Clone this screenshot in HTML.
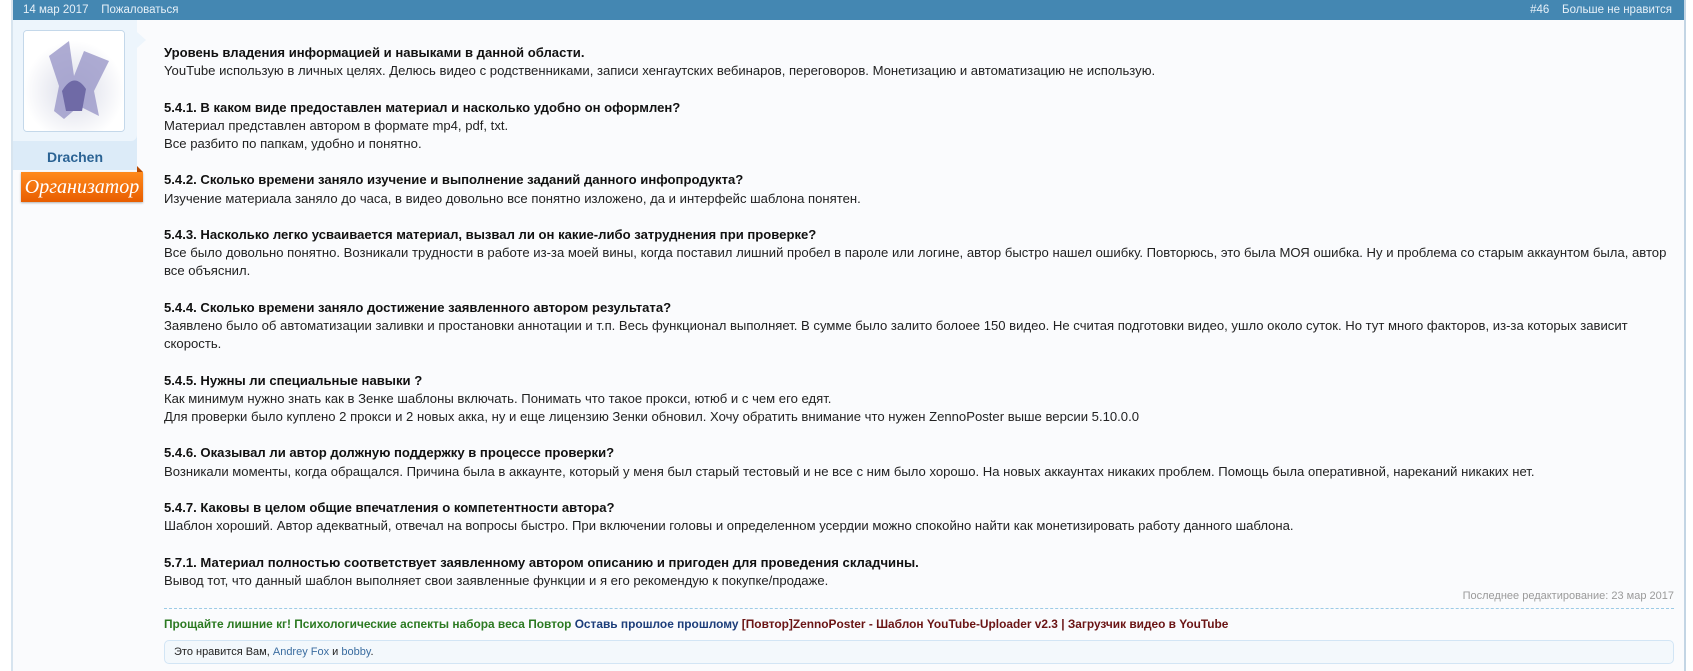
<!DOCTYPE html>
<html><head><meta charset="utf-8"><style>
*{margin:0;padding:0;box-sizing:border-box}
body{width:1693px;height:671px;background:#fff;font-family:"Liberation Sans",Arial,sans-serif;position:relative;overflow:hidden}
#frame{position:absolute;left:11px;top:0;width:1675px;height:671px;background:#fafbfd;border-left:2px solid #d7e4ef;border-right:2px solid #c3d5e4}
#hdr{position:absolute;left:13px;top:0;width:1671px;height:20px;background:#4487b2;color:#e6f0f8;font-size:11.5px;line-height:20px}
#hdr .l{position:absolute;left:10px}
#hdr .r{position:absolute;right:12px}
#side{position:absolute;left:13px;top:20px;width:124px;height:150px;background:#dcebf8}
#side .top{position:absolute;left:0;top:0;width:124px;height:121px;background:#edf5fc;border-radius:0 0 6px 0}
#ava{position:absolute;left:23px;top:30px;width:102px;height:102px;background:#fff;border:1px solid #c4d8ea;border-radius:4px;overflow:hidden}
#arrow{position:absolute;left:137px;top:32px;width:0;height:0;border-top:8px solid transparent;border-bottom:8px solid transparent;border-left:9px solid #edf5fc}
#name{position:absolute;left:13px;top:149px;width:124px;text-align:center;font-weight:bold;font-size:14px;color:#2b6394}
#badge{position:absolute;left:21px;top:172px;width:122px;height:30px;background:linear-gradient(#ff8a1c,#e85d00);color:#fff;font-family:"Liberation Serif",serif;font-style:italic;font-size:20px;text-align:center;line-height:30px;box-shadow:0 1px 2px rgba(0,0,0,.3)}
#fold{position:absolute;left:137px;top:166px;width:0;height:0;border-bottom:6px solid #b84a00;border-right:6px solid transparent}
#content{position:absolute;left:164px;top:44px;width:1510px;font-size:13.1px;line-height:18.2px;color:#222}
#content b{color:#111}
#edit{position:absolute;right:19px;top:590px;font-size:11px;color:#9a9a9a}
#dash{position:absolute;left:164px;top:608px;width:1510px;border-top:1px dashed #9ccbe6}
#sig{position:absolute;left:164px;top:617px;font-size:11.9px;font-weight:bold;white-space:nowrap}
#likes{position:absolute;left:164px;top:640px;width:1510px;height:24px;background:#f3f8fc;border:1px solid #d2e5f5;border-radius:5px;font-size:11px;line-height:22px;padding-left:9px;color:#222}
#likes a{color:#3b6da0;text-decoration:none}
</style></head><body>
<div id="frame"></div>
<div id="hdr"><span class="l">14 мар 2017 &nbsp;&nbsp; Пожаловаться</span><span class="r">#46 &nbsp;&nbsp; Больше не нравится</span></div>
<div id="side"><div class="top"></div></div>
<div id="arrow"></div>
<div id="ava"><svg width="100" height="100" viewBox="0 0 100 100"><defs><radialGradient id="g" cx=".5" cy=".6" r=".5"><stop offset="0" stop-color="#d9dbe8"/><stop offset="1" stop-color="#fff"/></radialGradient></defs><rect width="100" height="100" fill="url(#g)"/><path d="M30 80 L35 55 L25 25 L45 10 L50 45 L60 20 L85 30 L70 60 L75 85 L55 75 L40 88 Z" fill="#9a97c8" opacity=".8"/><path d="M38 60 Q50 40 62 58 L58 80 L42 80 Z" fill="#6f6aa6"/></svg></div>
<div id="name">Drachen</div>
<div id="fold"></div>
<div id="badge">Организатор</div>
<div id="content">
<b>Уровень владения информацией и навыками в данной области.</b><br>
YouTube использую в личных целях. Делюсь видео с родственниками, записи хенгаутских вебинаров, переговоров. Монетизацию и автоматизацию не использую.<br><br>
<b>5.4.1. В каком виде предоставлен материал и насколько удобно он оформлен?</b><br>
Материал представлен автором в формате mp4, pdf, txt.<br>
Все разбито по папкам, удобно и понятно.<br><br>
<b>5.4.2. Сколько времени заняло изучение и выполнение заданий данного инфопродукта?</b><br>
Изучение материала заняло до часа, в видео довольно все понятно изложено, да и интерфейс шаблона понятен.<br><br>
<b>5.4.3. Насколько легко усваивается материал, вызвал ли он какие-либо затруднения при проверке?</b><br>
Все было довольно понятно. Возникали трудности в работе из-за моей вины, когда поставил лишний пробел в пароле или логине, автор быстро нашел ошибку. Повторюсь, это была МОЯ ошибка. Ну и проблема со старым аккаунтом была, автор все объяснил.<br><br>
<b>5.4.4. Сколько времени заняло достижение заявленного автором результата?</b><br>
Заявлено было об автоматизации заливки и простановки аннотации и т.п. Весь функционал выполняет. В сумме было залито болоее 150 видео. Не считая подготовки видео, ушло около суток. Но тут много факторов, из-за которых зависит скорость.<br><br>
<b>5.4.5. Нужны ли специальные навыки ?</b><br>
Как минимум нужно знать как в Зенке шаблоны включать. Понимать что такое прокси, ютюб и с чем его едят.<br>
Для проверки было куплено 2 прокси и 2 новых акка, ну и еще лицензию Зенки обновил. Хочу обратить внимание что нужен ZennoPoster выше версии 5.10.0.0<br><br>
<b>5.4.6. Оказывал ли автор должную поддержку в процессе проверки?</b><br>
Возникали моменты, когда обращался. Причина была в аккаунте, который у меня был старый тестовый и не все с ним было хорошо. На новых аккаунтах никаких проблем. Помощь была оперативной, нареканий никаких нет.<br><br>
<b>5.4.7. Каковы в целом общие впечатления о компетентности автора?</b><br>
Шаблон хороший. Автор адекватный, отвечал на вопросы быстро. При включении головы и определенном усердии можно спокойно найти как монетизировать работу данного шаблона.<br><br>
<b>5.7.1. Материал полностью соответствует заявленному автором описанию и пригоден для проведения складчины.</b><br>
Вывод тот, что данный шаблон выполняет свои заявленные функции и я его рекомендую к покупке/продаже.
</div>
<div id="edit">Последнее редактирование: 23 мар 2017</div>
<div id="dash"></div>
<div id="sig"><span style="color:#2c7a22">Прощайте лишние кг! Психологические аспекты набора веса Повтор</span> <span style="color:#1c3d7a">Оставь прошлое прошлому</span> <span style="color:#6a1414">[Повтор]ZennoPoster - Шаблон YouTube-Uploader v2.3 | Загрузчик видео в YouTube</span></div>
<div id="likes">Это нравится Вам, <a>Andrey Fox</a> и <a>bobby</a>.</div>
</body></html>
